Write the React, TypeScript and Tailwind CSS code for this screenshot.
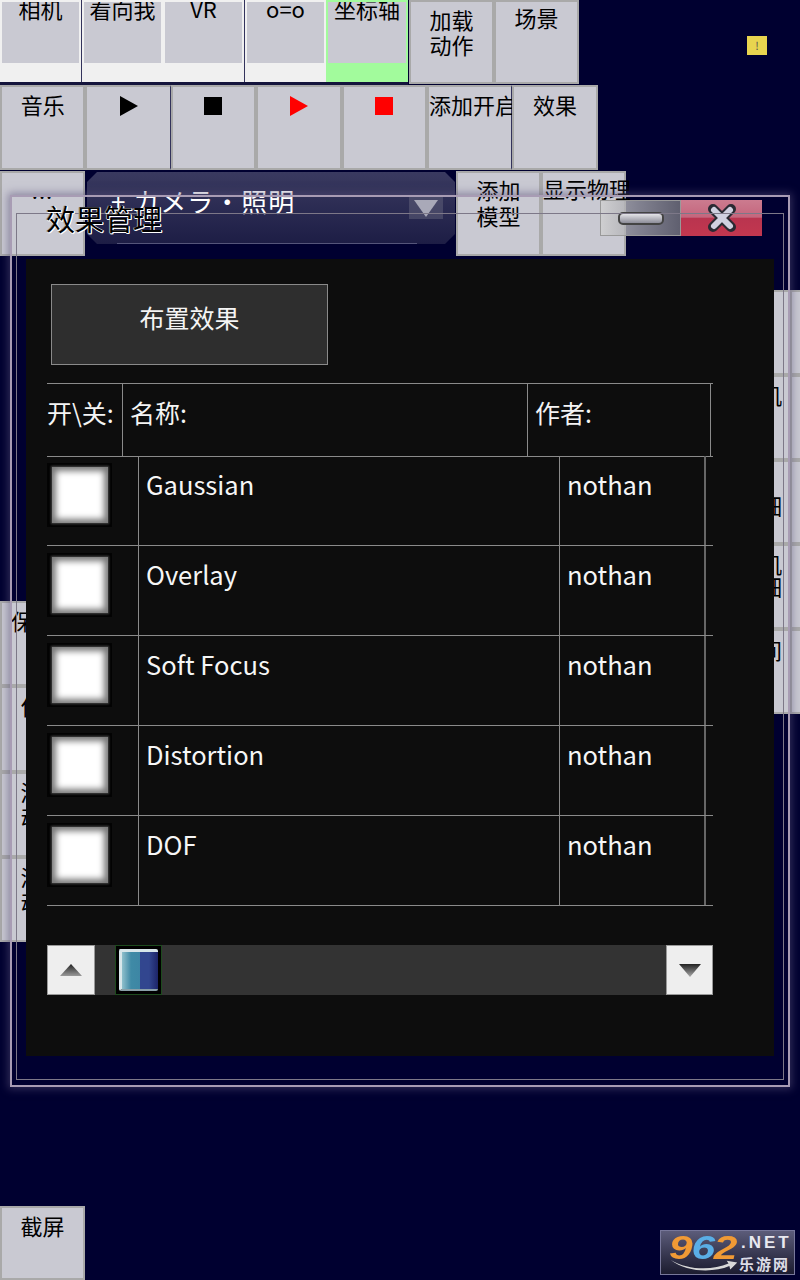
const font = "font-['Noto_Sans_CJK_SC','Noto_Sans',sans-serif]";

const Btn = ({ label, className = "" }: { label?: React.ReactNode; className?: string }) => (
  <div className={`shrink-0 h-[85px] w-[85px] bg-[#c9c9d2] border-2 border-[#a9a9a9] flex flex-col items-center text-[22px] leading-[29px] text-black whitespace-nowrap ${className}`}>
    {label}
  </div>
);

const Tab = ({ label, on, w }: { label: string; on?: boolean; w: string }) => (
  <div className={`h-[82px] ${w} flex flex-col shrink-0 ${on ? "bg-[#a2fb9c]" : "bg-[#f0f0f0]"}`}>
    <div className="h-[61px] mx-[2px] mt-[2px] bg-[#c9c9d2] flex justify-center text-[22px] leading-[12px] text-black whitespace-nowrap overflow-hidden">
      {label}
    </div>
  </div>
);

const Tri = ({ color }: { color: string }) => (
  <svg width="18" height="20" viewBox="0 0 18 20" className="mt-[9px]">
    <path d="M0 0 L18 10 L0 20 Z" fill={color} />
  </svg>
);

const Sq = ({ color }: { color: string }) => <div className={`mt-[10px] h-[18px] w-[18px] ${color}`} />;

const Check = () => (
  <div className="mt-[7px] h-[64px] w-[65px] bg-[#030303] flex items-center justify-center">
    <div className="h-[56px] w-[56px] bg-white shadow-[inset_0_0_6px_4px_#777,0_0_2px_1px_#444]" />
  </div>
);

const effects = ["Gaussian", "Overlay", "Soft Focus", "Distortion", "DOF"];

const Logo = () => (
  <div className="absolute left-[660px] top-[1230px] h-[45px] w-[135px] border border-[#77779a] bg-gradient-to-b from-[#5c5c7a] to-[#1c1c30] overflow-hidden">
    <span className="absolute left-[8px] -top-[3px] origin-left scale-x-[1.25] text-[34px] leading-[38px] tracking-[-1px] font-['Liberation_Sans',sans-serif] font-bold italic text-[#f09a35]">9<span className="text-[#5aaee6]">6</span>2</span>
    <span className="absolute left-[80px] top-[2px] text-[17px] leading-[20px] font-['Liberation_Sans',sans-serif] font-bold tracking-[3px] text-[#e8e8f0]">.NET</span>
    <span className="absolute left-[78px] top-[23px] text-[15px] leading-[20px] font-bold tracking-[2px] text-[#dcdce6]">乐游网</span>
    <svg width="70" height="14" viewBox="0 0 76 16" className="absolute left-[8px] top-[28px]">
      <path d="M0 1 C20 13 48 13 66 5 L64 2 L76 4 L68 12 L67 8 C48 16 18 15 0 1 Z" fill="#d8d8d8" />
    </svg>
  </div>
);

export default function App() {
  return (
    <div className={`relative h-[1280px] w-[800px] overflow-hidden bg-[#000030] ${font}`}>
      {/* top toolbars */}
      <div className="flex h-[85px] items-start">
        <div className="flex h-[85px] w-[408px] shrink-0 items-start border-b-[3px] border-[#14143c]">
          <Tab label="相机" w="w-[81px]" />
          <div className="h-[82px] w-px bg-[#33335c]" />
          <Tab label="看向我" w="w-[81px]" />
          <Tab label="VR" w="w-[81px]" />
          <div className="h-[82px] w-px bg-[#33335c]" />
          <Tab label="o=o" w="w-[81px]" />
          <Tab label="坐标轴" on w="w-[82px]" />
        </div>
        <Btn className="ml-px !h-[84px] pt-[3px]" label={<><span>加载</span><span className="-mt-[4px]">动作</span></>} />
        <Btn className="!h-[84px] pt-[1px]" label="场景" />
      </div>
      <div className="flex">
        <Btn className="!w-[85.4px] pt-[3px]" label="音乐" />
        <Btn className="!w-[85.4px] border-r-[#33335c] border-r" label={<Tri color="#000000" />} />
        <Btn className="!w-[85.4px]" label={<Sq color="bg-black" />} />
        <Btn className="!w-[85.4px]" label={<Tri color="#ff0000" />} />
        <Btn className="!w-[85.4px]" label={<Sq color="bg-[#ff0000]" />} />
        <Btn className="!w-[85.4px] border-r-[#33335c] border-r items-start pt-[3px]" label="添加开启" />
        <Btn className="!w-[85.4px] pt-[3px]" label="效果" />
      </div>
      <div className="mt-px flex">
        <Btn label={<span className="mt-[2px] tracking-[1px]">...</span>} />
        <div className="relative ml-[2px] mt-px flex h-[72px] w-[368px] shrink-0 items-start justify-between bg-gradient-to-b from-[#3a3a60] to-[#1d1d45] pl-[24px] pr-[12px] pt-[13px] text-[26px] leading-[32px] text-white [clip-path:polygon(10px_0,358px_0,368px_10px,368px_62px,358px_72px,10px_72px,0_62px,0_10px)]">
          <span className="tracking-[1px]">+ カメラ・照明</span>
          <svg width="34" height="22" viewBox="0 0 34 22" className="mt-[12px]">
            <rect width="34" height="22" fill="#6b6b80" opacity="0.45" />
            <path d="M5 3 L29 3 L17 20 Z" fill="#a9a9b8" />
          </svg>
          <div className="absolute bottom-0 left-[30px] h-px w-[300px] bg-[#55557a]" />
        </div>
        <Btn className="ml-px pt-[2px]" label={<><span>添加</span><span className="-mt-[3px]">模型</span></>} />
        <Btn className="items-start pt-[1px]" label="显示物理" />
      </div>

      {/* side buttons mostly hidden behind the window */}
      <div className="flex items-start justify-between">
        <div className="mt-[345px] flex flex-col">
          <Btn className="!h-[85.25px] items-start pl-[9px] pt-[3px]" label="保存场景" />
          <Btn className="!h-[85.25px] pt-[3px]" label="位置" />
          <Btn className="!h-[85.25px] pt-[3px]" label={<><span>添加</span><span className="-mt-[4px]">动作</span></>} />
          <Btn className="!h-[85.25px] pt-[3px]" label={<><span>添加</span><span className="-mt-[4px]">动作</span></>} />
        </div>
        <div className="mt-[34px] flex">
          <div className="flex flex-col">
            <Btn className="!h-[84.8px]" label="" />
            <Btn className="!h-[84.8px] pl-[3px] pt-[3px]" label="摄像机" />
            <Btn className="!h-[84.8px] pl-[3px] pt-[29px]" label="全详细" />
            <Btn className="!h-[84.8px] pl-[3px] pt-[3px]" label={<><span>摄像机</span><span className="-mt-[6px]">全详细</span></>} />
            <Btn className="!h-[84.8px] pl-[3px] pt-[4px]" label="长时间" />
          </div>
          <div className="flex w-[10px] flex-col overflow-hidden">
            {[0, 1, 2, 3, 4].map((i) => (
              <Btn className="!h-[84.8px]" key={i} />
            ))}
          </div>
        </div>
      </div>

      <div className="absolute bottom-0 left-0">
        <Btn className="!h-[74px] pt-[3px]" label="截屏" />
      </div>

      <div className="absolute left-[747px] top-[36px] flex h-[19px] w-[20px] items-center justify-center bg-[#e8d44f] text-[11px] leading-none text-[#555]">!</div>

      {/* effect manager window */}
      <div className="absolute left-[10px] top-[195px] h-[892px] w-[780px] border-2 border-[#a89cb4] shadow-[0_0_8px_2px_rgba(90,80,120,0.55)]">
        <div className="absolute left-[588px] top-[3px] flex h-[36px]">
          <div className="flex w-[81px] items-center justify-center border border-[#999] bg-[linear-gradient(90deg,#d0d0d0cc,#a2a2a8cc_48%,#77777fcc)]">
            <div className="h-[13px] w-[46px] rounded-[5px] border-2 border-[#444] bg-gradient-to-b from-[#e4e4e8] to-[#8d8d99] blur-[0.5px]" />
          </div>
          <div className="flex w-[81px] items-center justify-center bg-[linear-gradient(#cc7b8f_0%,#c4667d_48%,#b9344f_50%,#c2374f_100%)]">
            <svg width="30" height="30" viewBox="0 0 30 30">
              <path d="M6 6 L24 24 M24 6 L6 24" stroke="#2a2a33" strokeWidth="10" strokeLinecap="round" />
              <path d="M7 7 L23 23 M23 7 L7 23" stroke="#d0d0e0" strokeWidth="6" strokeLinecap="round" />
            </svg>
          </div>
        </div>

        <div className="absolute left-[4px] top-[16px] h-[867px] w-[768px] border border-[#7d7888]" />
        <div className="absolute left-[34px] top-[2px] text-[29px] leading-[38px] text-black [text-shadow:1px_1px_0_#fff,1px_0_0_#fff,0_1px_0_#fff,-1px_0_0_#999]">效果管理</div>

        <div className="absolute left-[14px] top-[62px] h-[797px] w-[748px] bg-[#0d0d0d] pl-[21px] pt-[25px] text-white">
          <div className="ml-[4px] flex h-[81px] w-[277px] items-center justify-center border border-[#8a8a8a] bg-[#2e2e2e] pb-[14px] text-[25px] text-[#f4f4f4]">
            布置效果
          </div>

          <div className="mt-[18px] flex h-[74px] w-[666px] border-y border-[#8a8a8a] text-[25px] leading-[32px] text-[#f4f4f4]">
            <div className="w-[76px] shrink-0 whitespace-nowrap border-r border-[#8a8a8a] pt-[12px]">开\关:</div>
            <div className="w-[405px] shrink-0 border-r border-[#8a8a8a] pl-[7px] pt-[12px]">名称:</div>
            <div className="w-[183px] shrink-0 border-r border-[#8a8a8a] pl-[7px] pt-[12px]">作者:</div>
          </div>

          <div className="-mt-px">
            {effects.map((name) => (
              <div key={name} className="flex h-[90px] w-[666px] border-b border-[#8a8a8a] text-[25.5px] leading-[36px] text-[#f6f6f6]">
                <div className="w-[92px] shrink-0 border-r border-[#8a8a8a]">
                  <Check />
                </div>
                <div className="w-[421px] shrink-0 border-r border-[#8a8a8a] pl-[7px] pt-[10px]">{name}</div>
                <div className="w-[146px] shrink-0 border-r-2 border-[#666] pl-[7px] pt-[10px]">nothan</div>
              </div>
            ))}
          </div>

          <div className="mt-[39px] flex h-[50px] w-[666px] items-stretch justify-between bg-[#333333]">
            <div className="flex w-[48px] items-center justify-center border border-[#999] bg-[#eeeeee]">
              <svg width="26" height="16" viewBox="0 0 26 16">
                <defs>
                  <linearGradient id="up" x1="0" y1="0" x2="0" y2="1">
                    <stop offset="0" stopColor="#222" />
                    <stop offset="1" stopColor="#999" />
                  </linearGradient>
                </defs>
                <path d="M13 2 L24 14 L2 14 Z" fill="url(#up)" className="blur-[0.7px]" />
              </svg>
            </div>
            <div className="ml-[20px] mr-auto flex h-[50px] w-[47px] items-center justify-center border border-[#1d4a1d] bg-black">
              <div className="flex h-[42px] w-[39px] overflow-hidden rounded-[2px] border-l-[3px] border-t-[3px] border-[#d8e6ea] border-b-[2px] border-b-[#8aa0a8] blur-[0.4px]">
                <div className="w-1/2 bg-gradient-to-r from-[#8fc0cc] via-[#3f8aa6] to-[#3d86a4]" />
                <div className="w-1/2 bg-gradient-to-r from-[#32468f] via-[#32468f] to-[#1d2468]" />
              </div>
            </div>
            <div className="flex w-[47px] items-center justify-center border border-[#999] bg-[#eeeeee]">
              <svg width="26" height="18" viewBox="0 0 26 18">
                <defs>
                  <linearGradient id="down" x1="0" y1="0" x2="0" y2="1">
                    <stop offset="0" stopColor="#222" />
                    <stop offset="1" stopColor="#aaa" />
                  </linearGradient>
                </defs>
                <path d="M2 3 L24 3 L13 16 Z" fill="url(#down)" className="blur-[0.7px]" />
              </svg>
            </div>
          </div>
        </div>
      </div>

      <Logo />
    </div>
  );
}
